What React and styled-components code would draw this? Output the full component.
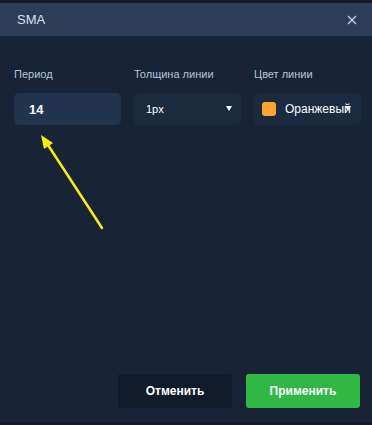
import React from "react";
import styled, { createGlobalStyle } from "styled-components";

const Global = createGlobalStyle`
  html, body { margin: 0; padding: 0; background: #182336; }
  body { font-family: "Liberation Sans", Arial, sans-serif; }
  * { box-sizing: border-box; }
`;

const Dialog = styled.div`
  width: 372px;
  height: 425px;
  display: flex;
  flex-direction: column;
  background: #182336;
  border-top: 3px solid #121a27;
  border-bottom: 3px solid #121a27;
  position: relative;
`;

const Header = styled.div`
  height: 33px;
  background: #2c3e57;
  display: flex;
  align-items: center;
  justify-content: space-between;
  padding: 0 14px 0 17px;
  color: #d7e2ef;
  font-size: 13px;
`;

const Close = styled.button`
  background: none;
  border: none;
  padding: 0;
  width: 12px;
  height: 12px;
  display: flex;
  color: #b9c9dc;
`;

const Body = styled.div`
  flex: 1;
  display: flex;
  flex-direction: column;
  padding: 32px 12px 14px 14px;
`;

const Fields = styled.div`
  display: grid;
  grid-template-columns: 107px 107px 107px;
  column-gap: 13px;
`;

const Field = styled.div`
  display: flex;
  flex-direction: column;
  gap: 12px;
`;

const Label = styled.div`
  font-size: 11px;
  color: #b7c6d8;
  height: 13px;
`;

const Box = styled.div`
  height: 32px;
  border-radius: 5px;
  background: ${(p) => (p.$active ? "#22334d" : "#1c2a40")};
  display: flex;
  align-items: center;
  padding: 0 0 0 ${(p) => p.$pl}px;
  color: #ffffff;
  font-size: ${(p) => p.$fs || 11}px;
  font-weight: ${(p) => (p.$bold ? 700 : 400)};
  white-space: nowrap;
  position: relative;
`;

const Caret = styled.span`
  position: absolute;
  right: ${(p) => p.$r}px;
  top: 13px;
  width: 0;
  height: 0;
  border-left: 3.5px solid transparent;
  border-right: 3.5px solid transparent;
  border-top: 5px solid #ffffff;
`;

const Swatch = styled.span`
  width: 14px;
  height: 14px;
  border-radius: 3px;
  background: #f9a62a;
  margin-right: 9px;
  flex: none;
`;

const Spacer = styled.div`
  flex: 1;
`;

const Actions = styled.div`
  display: flex;
  justify-content: flex-end;
  gap: 14px;
`;

const Btn = styled.button`
  width: 114px;
  height: 34px;
  border: none;
  border-radius: 3px;
  background: ${(p) => (p.$primary ? "#2fb844" : "#111a28")};
  color: #ffffff;
  font-family: inherit;
  font-size: 12px;
  font-weight: 700;
`;

const Pointer = styled.svg`
  position: absolute;
  left: 0;
  top: 0;
  pointer-events: none;
`;

export default function App() {
  return (
    <>
      <Global />
      <Dialog>
        <Header>
          <span>SMA</span>
          <Close aria-label="close">
            <svg width="12" height="12" viewBox="0 0 12 12">
              <path d="M2 2 L10 10 M10 2 L2 10" stroke="#c3d2e4" strokeWidth="1.3" />
            </svg>
          </Close>
        </Header>
        <Body>
          <Fields>
            <Field>
              <Label>Период</Label>
              <Box $active $pl={15} $fs={13} $bold>14</Box>
            </Field>
            <Field>
              <Label>Толщина линии</Label>
              <Box $pl={12}>
                1px
                <Caret $r={9} />
              </Box>
            </Field>
            <Field>
              <Label>Цвет линии</Label>
              <Box $pl={8} $fs={12}>
                <Swatch />
                Оранжевый
                <Caret $r={10} />
              </Box>
            </Field>
          </Fields>
          <Spacer />
          <Actions>
            <Btn>Отменить</Btn>
            <Btn $primary>Применить</Btn>
          </Actions>
        </Body>
        <Pointer width="372" height="425" viewBox="0 0 372 425">
          <line x1="102" y1="225" x2="48" y2="142" stroke="#f6f200" strokeWidth="2.5" strokeLinecap="round" />
          <polygon points="41,132 53,140 44,146" fill="#f6f200" />
        </Pointer>
      </Dialog>
    </>
  );
}
